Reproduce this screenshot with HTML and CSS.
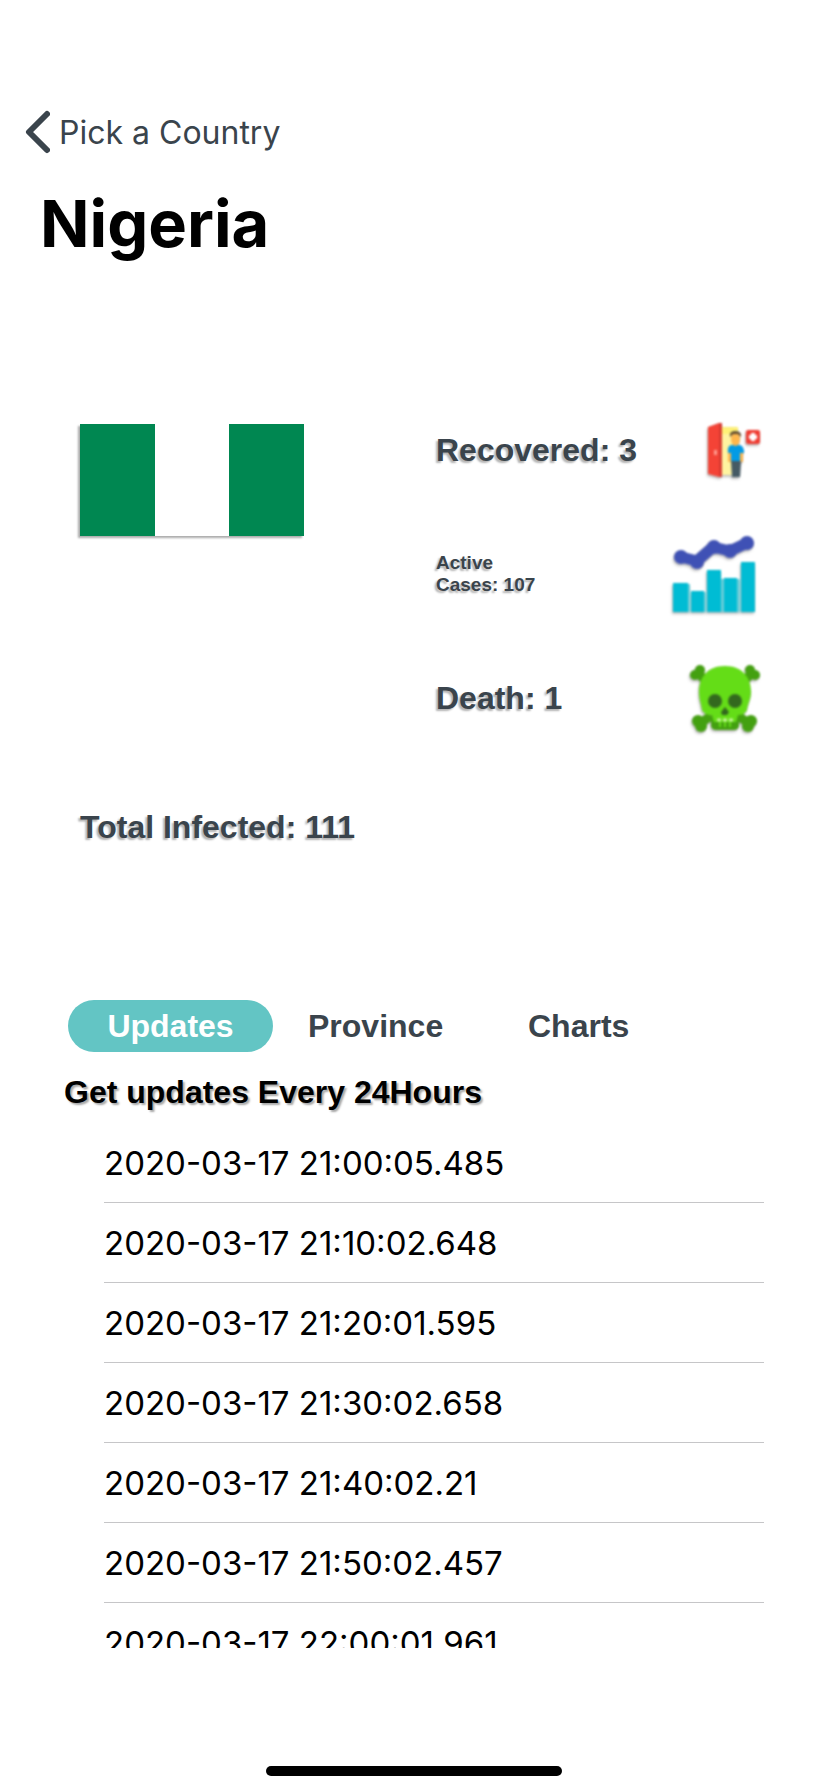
FILE: index.html
```html
<!DOCTYPE html>
<html lang="en">
<head>
<meta charset="utf-8">
<meta name="viewport" content="width=device-width, initial-scale=1">
<title>Nigeria</title>
<link rel="stylesheet" href="styles.css">
</head>
<body>
<div class="screen">
  <header class="header">
    <a class="back" href="#">
      <svg class="back-icon" viewBox="0 0 26 44" aria-hidden="true"><path d="M23 4L5 22L23 40" fill="none" stroke="#3a444c" stroke-width="6" stroke-linecap="round" stroke-linejoin="round"/></svg>
      <span>Pick a Country</span>
    </a>
    <h1 class="title">Nigeria</h1>
  </header>

  <main class="main">
    <section class="summary">
      <svg class="flag" viewBox="0 0 224 112" role="img" aria-label="Flag of Nigeria">
        <rect width="224" height="112" fill="#fff"/>
        <rect width="75" height="112" fill="#008751"/>
        <rect x="149" width="75" height="112" fill="#008751"/>
      </svg>
      <ul class="stats">
        <li class="stat">
          <span>Recovered: 3</span>
          <svg class="stat-icon" viewBox="0 0 96 96" aria-hidden="true">
            <path d="M53 25H70V73H53Z" fill="#fff3a0"/>
            <path d="M53 25H70V32H53Z" fill="#fff176"/>
            <path d="M40 25L51 21H54V75H51L40 72Z" fill="#f44336"/>
            <path d="M51 21H54V75H51Z" fill="#d83a31"/>
            <rect x="46" y="48" width="3" height="5" fill="#ff9b8f"/>
            <path d="M60 47H64V60H60ZM71 47H75V60H71Z" fill="#ffb74d"/>
            <path d="M63 43H72Q76 44 76 51H60Q59 44 63 43Z" fill="#039be5"/>
            <path d="M63 47H72V60H63Z" fill="#039be5"/>
            <path d="M63 59H73L72 75H64Z" fill="#455a64"/>
            <ellipse cx="67.500" cy="37" rx="4.500" ry="7" fill="#ffb74d"/>
            <path d="M62 35Q61 29 67 29Q74 29 73 35L70 32H65Z" fill="#5d4a30"/>
            <rect x="78" y="28" width="14" height="14" rx="2" fill="#f03c32"/>
            <path d="M85 31V39M81 35H89" stroke="#fff" stroke-width="4"/>
          </svg>
        </li>
        <li class="stat stat-small">
          <span>Active<br>Cases: 107</span>
          <svg class="stat-icon" viewBox="0 0 96 96" aria-hidden="true">
            <path d="M20 58H22V86H20ZM36 66H38V86H36ZM53 53H56V86H53ZM69 53H72V86H69Z" fill="#69cdd8"/>
            <path d="M5 57H20V86H5ZM23 65H36V86H23ZM39 44H53V86H39ZM56 52H69V86H56ZM73 36H87V86H73Z" fill="#00bcd4"/>
            <path d="M13 31L29 35L45 21L62 25L79 17" fill="none" stroke="#3f51b5" stroke-width="11" stroke-linejoin="round"/>
            <g fill="#3f51b5"><circle cx="13" cy="31" r="7"/><circle cx="29" cy="36" r="7"/><circle cx="46" cy="21" r="7"/><circle cx="62" cy="25" r="7"/><circle cx="79" cy="17" r="7"/></g>
          </svg>
        </li>
        <li class="stat">
          <span>Death: 1</span>
          <svg class="stat-icon" viewBox="0 0 96 96" aria-hidden="true">
            <g fill="#43a010"><circle cx="32" cy="20" r="5"/><circle cx="27" cy="25" r="5"/><circle cx="82" cy="20" r="5"/><circle cx="87" cy="25" r="5"/><circle cx="30" cy="71" r="6"/><circle cx="33" cy="76" r="6"/><circle cx="83" cy="71" r="6"/><circle cx="80" cy="76" r="6"/></g>
            <path d="M28 22L40 32M86 22L74 32M31 74L43 66M82 74L70 66" stroke="#43a010" stroke-width="9"/>
            <path d="M43 62H71V76Q70 80 66 80H48Q44 80 43 76Z" fill="#43a010"/>
            <path d="M57 16C74 16 83 27 83 42C83 49 80 53 79 60Q77 65 70 65L68 72H46L44 65Q36 65 34 60C33 53 31 49 31 42C31 27 40 16 57 16Z" fill="#64dd17"/>
            <g fill="#33691e"><circle cx="47" cy="51" r="7"/><circle cx="67" cy="51" r="7"/><path d="M57 57L61 62L59 65H54L53 62Z"/></g>
            <path d="M49 70H65" stroke="#c5f59a" stroke-width="3" stroke-dasharray="4 2"/>
            <path d="M52 72V77M57 72V77M62 72V77" stroke="#64dd17" stroke-width="2"/>
          </svg>
        </li>
      </ul>
      <p class="total">Total Infected: 111</p>
    </section>

    <nav class="tabs">
      <button class="tab tab-active" type="button">Updates</button>
      <button class="tab" type="button">Province</button>
      <button class="tab" type="button">Charts</button>
    </nav>

    <h2 class="note">Get updates Every 24Hours</h2>
    <ul class="updates">
      <li class="update">2020-03-17 21:00:05.485</li>
      <li class="update">2020-03-17 21:10:02.648</li>
      <li class="update">2020-03-17 21:20:01.595</li>
      <li class="update">2020-03-17 21:30:02.658</li>
      <li class="update">2020-03-17 21:40:02.21</li>
      <li class="update">2020-03-17 21:50:02.457</li>
      <li class="update">2020-03-17 22:00:01.961</li>
    </ul>
  </main>
  <div class="home-bar"></div>
</div>
</body>
</html>
```

FILE: styles.css
```css
* {
  box-sizing: border-box;
  margin: 0;
  padding: 0;
}

body {
  background: #fff;
  color: #000;
  font-family: Inter, "Liberation Sans", sans-serif;
}

.screen {
  display: flex;
  flex-direction: column;
  height: 100vh;
  padding-bottom: 16px;
}

.header {
  padding: 108px 24px 0;
}

.back {
  display: flex;
  align-items: center;
  gap: 9px;
  width: fit-content;
  height: 48px;
  color: #3a444c;
  font-size: 32px;
  text-decoration: none;
}

.back-icon {
  width: 26px;
  height: 44px;
}

.title {
  padding-left: 16px;
  margin-top: 28px;
  font-size: 65px;
  font-weight: 700;
  line-height: 80px;
}

.main {
  display: flex;
  flex: 1;
  flex-direction: column;
  min-height: 0;
  padding: 138px 64px 0;
}

.summary {
  display: grid;
  grid-template-columns: 1fr 328px;
  padding-left: 16px;
  color: #3a444c;
  font-family: "Liberation Sans", Arial, sans-serif;
  font-size: 32px;
  font-weight: 700;
  text-shadow: -2px 2px 2px rgba(0, 0, 0, 0.3);
}

.flag {
  width: 224px;
  height: 112px;
  margin-top: 22px;
  box-shadow: -2px 2px 2px rgba(0, 0, 0, 0.33);
}

.stats {
  display: flex;
  flex-direction: column;
  gap: 28px;
  list-style: none;
}

.stat {
  display: flex;
  align-items: center;
  justify-content: space-between;
}

.stat-small {
  font-size: 19px;
  line-height: 22px;
}

.stat-icon {
  width: 96px;
  height: 96px;
  filter: blur(1px) drop-shadow(-1px 2px 1px rgba(0, 0, 0, 0.25));
}

.total {
  grid-column: 1 / -1;
  margin-top: 61px;
  line-height: 40px;
}

.tabs {
  display: grid;
  grid-template-columns: 205px 185px auto;
  justify-content: start;
  column-gap: 35px;
  margin-top: 153px;
  padding-left: 4px;
}

.tab {
  height: 52px;
  border: 0;
  border-radius: 26px;
  background: none;
  color: #3a444c;
  font: 700 32px/52px "Liberation Sans", Arial, sans-serif;
  text-align: left;
}

.tab-active {
  background: #63c5c4;
  color: #fff;
  text-align: center;
}

.note {
  margin-top: 20px;
  font: 700 32px/40px "Liberation Sans", Arial, sans-serif;
  text-shadow: 2px 2px 2px rgba(0, 0, 0, 0.35);
}

.updates {
  flex: 1;
  min-height: 0;
  margin: 11px 0 118px 40px;
  overflow: hidden;
  list-style: none;
}

.update {
  height: 80px;
  border-bottom: 1px solid #c6c6c8;
  font-size: 33px;
  line-height: 80px;
}

.home-bar {
  flex: none;
  align-self: center;
  width: 296px;
  height: 10px;
  border-radius: 5px;
  background: #000;
}
```
